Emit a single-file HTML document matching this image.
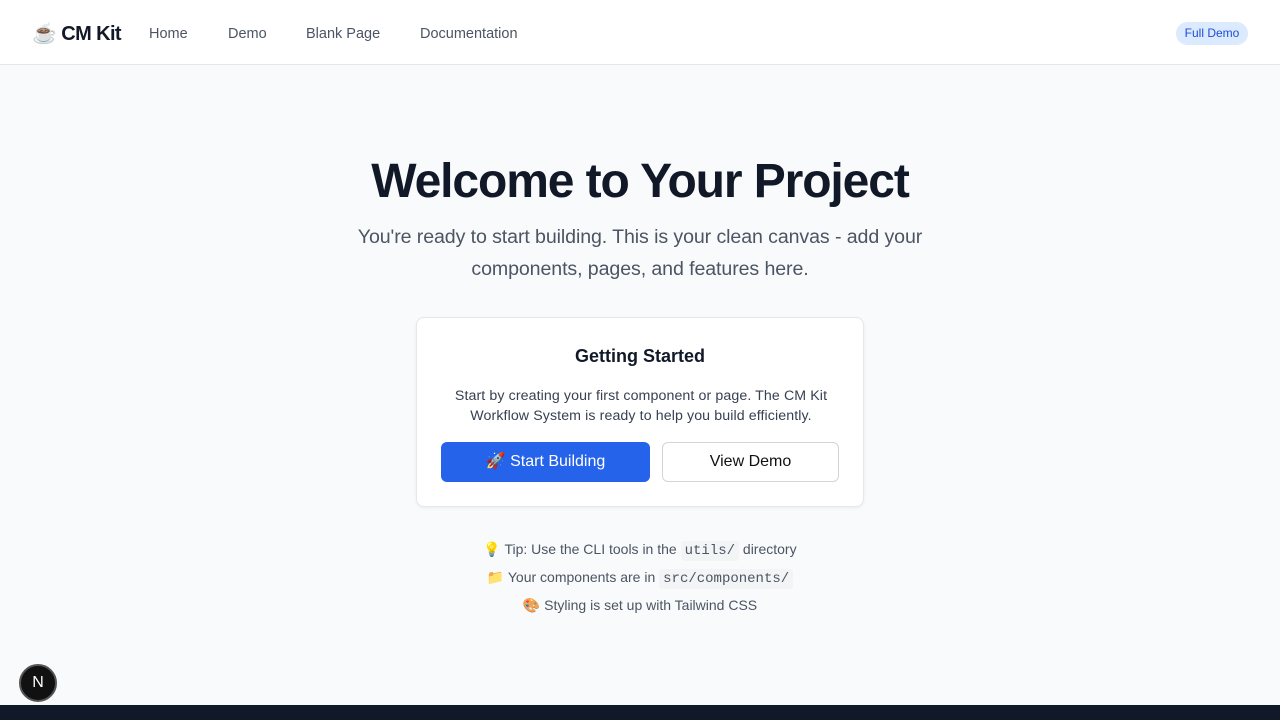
<!DOCTYPE html>
<html><head><meta charset="utf-8"><style>
*{box-sizing:border-box;margin:0;padding:0}
body{width:1280px;height:720px;overflow:hidden;background:#f9fafb;font-family:"Liberation Sans","Noto Sans CJK SC",sans-serif;position:relative}
header{position:absolute;top:0;left:0;width:1280px;height:65px;background:#fff;border-bottom:1px solid #e5e7eb}
.logo{position:absolute;left:32px;top:21px;font-size:20px;font-weight:bold;color:#111827;letter-spacing:-0.6px}
.nav a{position:absolute;top:26px;font-size:14.5px;color:#4b5563;text-decoration:none}
.badge{position:absolute;left:1176px;top:22px;width:72px;height:23px;border-radius:12px;background:#dbeafe;color:#1d4ed8;font-size:12px;text-align:center;line-height:23px}
h1{position:absolute;top:154px;width:1280px;text-align:center;font-size:48px;font-weight:bold;color:#111827;letter-spacing:-1.1px}
.sub{position:absolute;top:221px;left:340px;width:600px;text-align:center;font-size:19.6px;line-height:32px;color:#4b5563;letter-spacing:-0.1px}
.card{position:absolute;left:416px;top:317px;width:448px;height:190px;background:#fff;border:1px solid #e5e7eb;border-radius:8px;box-shadow:0 1px 3px rgba(0,0,0,.06)}
.card h2{position:absolute;top:28px;width:100%;text-align:center;font-size:18px;font-weight:bold;color:#111827}
.card p{position:absolute;top:68px;left:14px;width:420px;text-align:center;font-size:14.2px;line-height:20px;color:#374151;letter-spacing:0.1px}
.b1{position:absolute;left:24px;top:124px;width:209px;height:40px;border-radius:6px;background:#2563eb;color:#fff;font-size:16px;text-align:center;line-height:40px}
.b2{position:absolute;left:245px;top:124px;width:177px;height:40px;border-radius:6px;border:1px solid #d1d5db;background:#fff;color:#111;font-size:16px;text-align:center;line-height:38px}
.tips{position:absolute;top:535px;width:1280px;text-align:center;font-size:14px;color:#4b5563}
.tips div{height:28px;line-height:28px}
code{font-family:"Liberation Mono",monospace;background:#f3f4f6;padding:1px 4px;border-radius:3px;font-size:14px;line-height:18px;display:inline-block}
.n{position:absolute;left:19px;top:664px;width:38px;height:38px;border-radius:50%;background:#111;border:2px solid #555;color:#fff;text-align:center;line-height:34px;font-size:16px}
.foot{position:absolute;left:0;top:705px;width:1280px;height:15px;background:#111827}
</style></head><body>
<header>
<div class="logo">☕ CM Kit</div>
<div class="nav"><a style="left:149px">Home</a><a style="left:228px">Demo</a><a style="left:306px">Blank Page</a><a style="left:420px">Documentation</a></div>
<div class="badge">Full Demo</div>
</header>
<h1>Welcome to Your Project</h1>
<div class="sub">You're ready to start building. This is your clean canvas - add your components, pages, and features here.</div>
<div class="card">
<h2>Getting Started</h2>
<p>Start by creating your first component or page. The CM Kit Workflow System is ready to help you build efficiently.</p>
<div class="b1">🚀 Start Building</div>
<div class="b2">View Demo</div>
</div>
<div class="tips">
<div>💡 Tip: Use the CLI tools in the <code>utils/</code> directory</div>
<div>📁 Your components are in <code>src/components/</code></div>
<div>🎨 Styling is set up with Tailwind CSS</div>
</div>
<div class="n">N</div>
<div class="foot"></div>
</body></html>
